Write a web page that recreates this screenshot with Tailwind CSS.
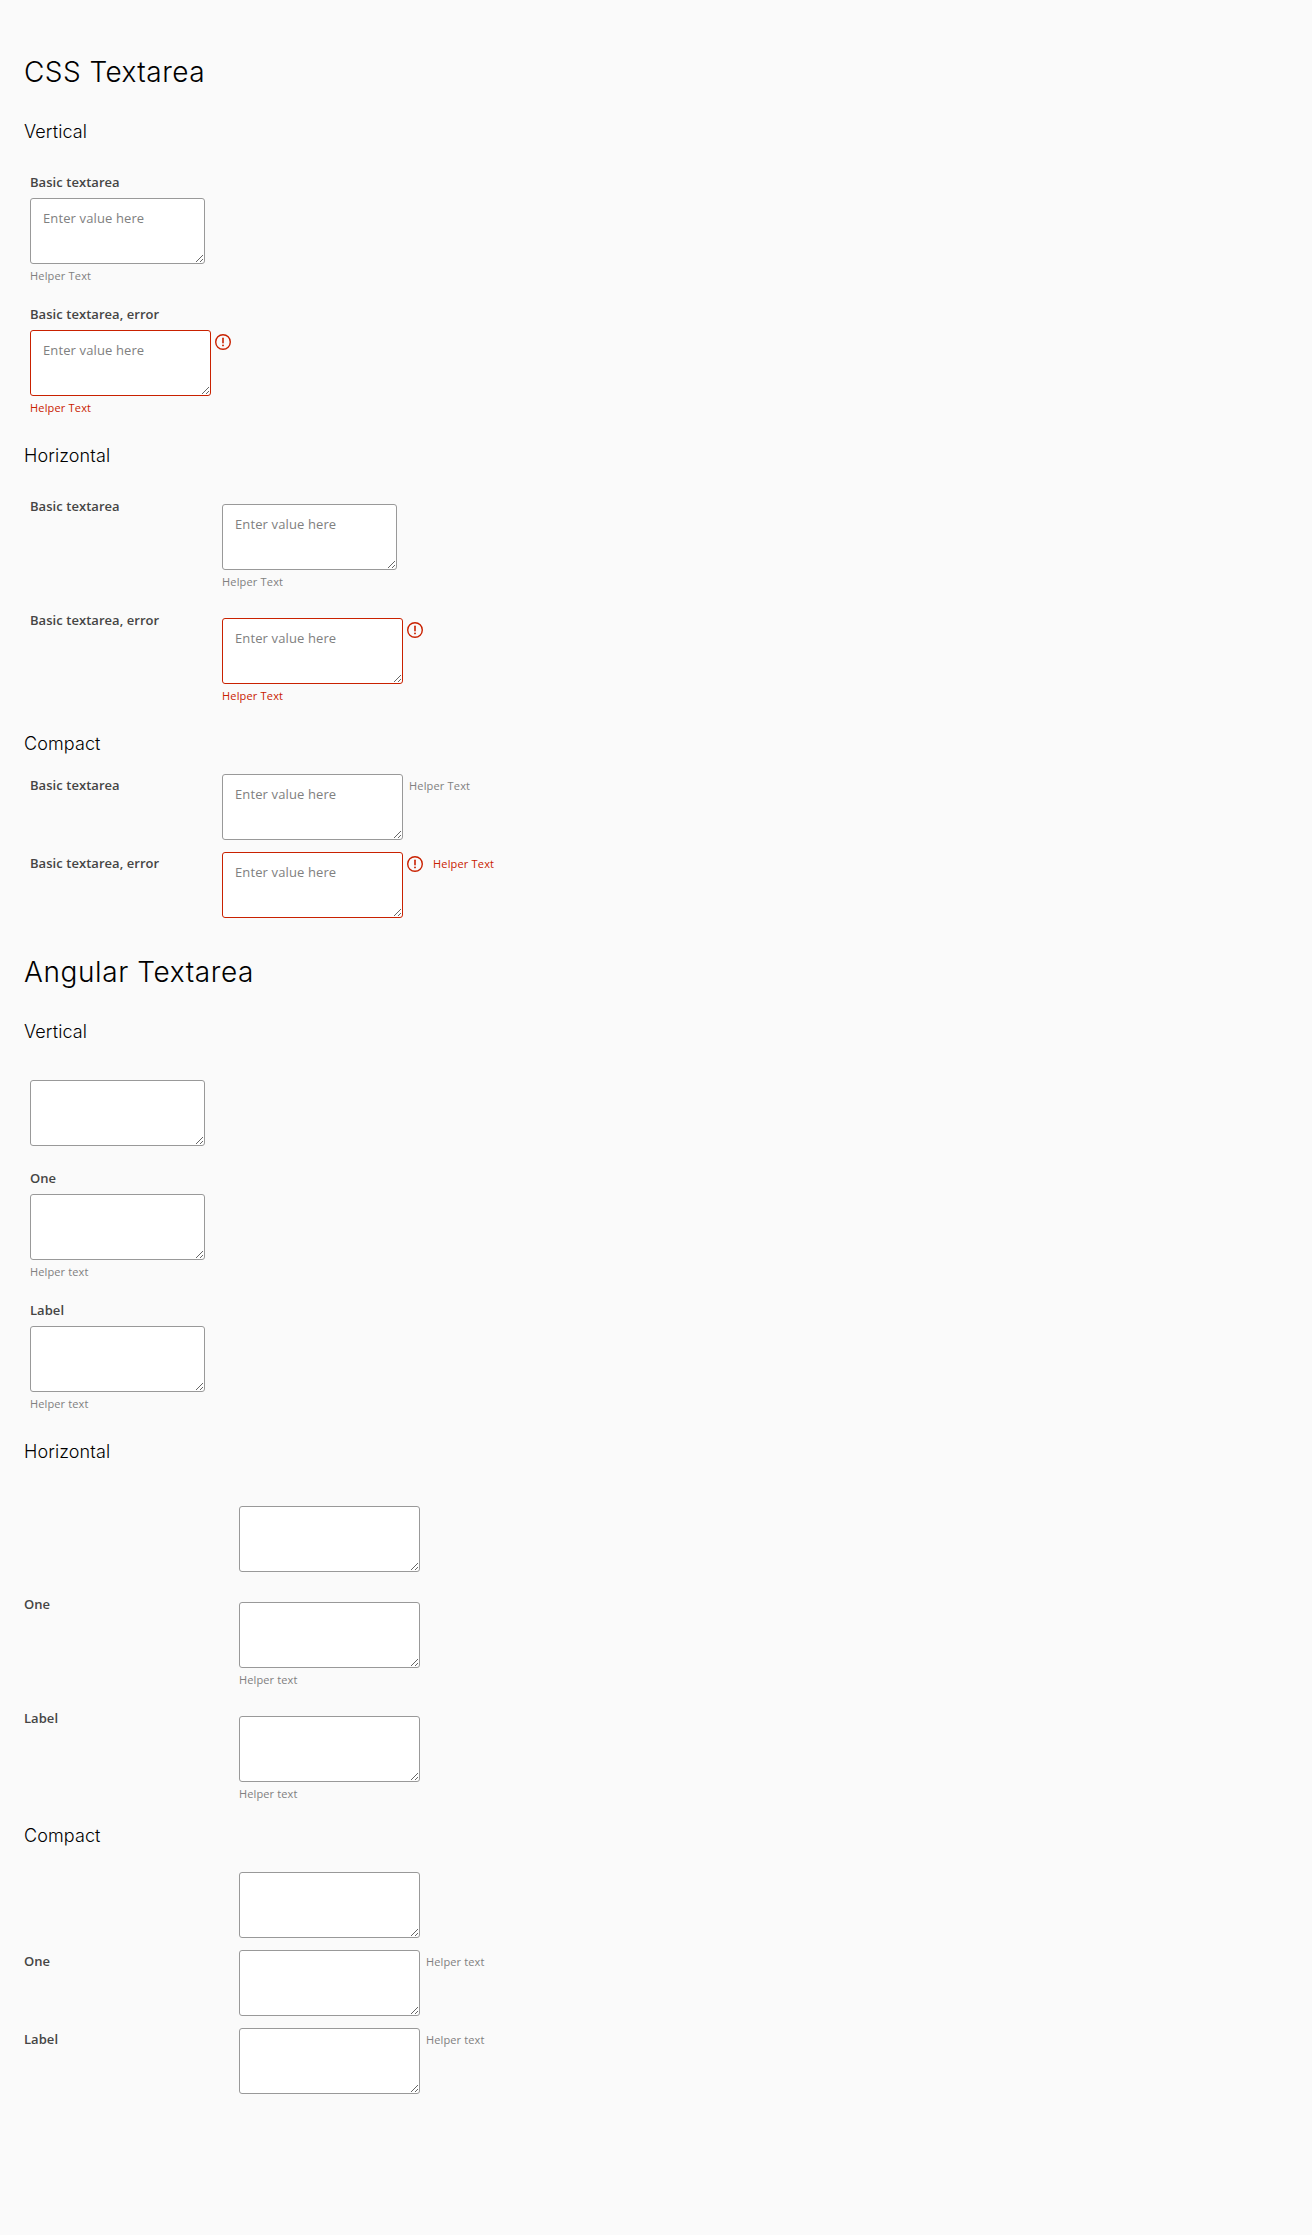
<!DOCTYPE html>
<html lang="en">
<head>
<meta charset="utf-8">
<title>Textarea</title>
<script src="https://cdn.jsdelivr.net/npm/@tailwindcss/browser@4"></script>
</head>
<body class="min-h-[2235px] bg-[#fafafa] font-['Open_Sans',sans-serif] text-[13px] leading-6 text-[#454545]">
<svg class="hidden">
  <symbol id="exclamation" viewBox="0 0 16 16">
    <circle cx="8" cy="8" r="7.3" fill="none" stroke="currentColor" stroke-width="1.4"/>
    <path d="M8 4.2v4.6" fill="none" stroke="currentColor" stroke-width="1.6" stroke-linecap="round"/>
    <circle cx="8" cy="11.4" r=".95" fill="currentColor"/>
  </symbol>
</svg>
<main class="px-6 pt-12">

  <h1 class="h-12 font-['Inter',sans-serif] text-[28px] leading-12 font-[280] tracking-[0.45px] text-black">CSS Textarea</h1>

  <h4 class="mt-6 h-6 font-['Inter',sans-serif] text-[18px] font-light tracking-[0.1px] text-black">Vertical</h4>
  <form class="mt-[27px] flex flex-col gap-[15px] pl-1.5">
    <div class="flex flex-col items-start">
      <label class="h-6 leading-[22px] font-semibold tracking-[0.05px]">Basic textarea</label>
      <textarea class="mt-[3px] h-[66px] w-[175px] resize rounded-[3px] border border-[#999] bg-white px-3 py-[7px] tracking-[0.12px] placeholder:text-[#808080]" placeholder="Enter value here"></textarea>
      <span class="h-6 text-[11px] tracking-[0.18px] text-[#808080]">Helper Text</span>
    </div>
    <div class="flex flex-col items-start">
      <label class="h-6 leading-[22px] font-semibold tracking-[0.05px]">Basic textarea, error</label>
      <div class="mt-[3px] flex items-start gap-1">
        <textarea class="h-[66px] w-[181px] resize rounded-[3px] border border-[#c92100] bg-white px-3 py-[7px] tracking-[0.12px] placeholder:text-[#808080]" placeholder="Enter value here"></textarea>
        <svg class="mt-1 size-4 text-[#c92100]"><use href="#exclamation"/></svg>
      </div>
      <span class="h-6 text-[11px] tracking-[0.18px] text-[#c92100]">Helper Text</span>
    </div>
  </form>

  <h4 class="mt-6 h-6 font-['Inter',sans-serif] text-[18px] font-light tracking-[0.1px] text-black">Horizontal</h4>
  <form class="mt-[27px] flex flex-col gap-[15px] pl-1.5">
    <div class="flex items-start">
      <label class="w-48 leading-[22px] font-semibold tracking-[0.05px]">Basic textarea</label>
      <div class="flex flex-col items-start pt-[9px]">
        <textarea class="h-[66px] w-[175px] resize rounded-[3px] border border-[#999] bg-white px-3 py-[7px] tracking-[0.12px] placeholder:text-[#808080]" placeholder="Enter value here"></textarea>
        <span class="h-6 text-[11px] tracking-[0.18px] text-[#808080]">Helper Text</span>
      </div>
    </div>
    <div class="flex items-start">
      <label class="w-48 leading-[22px] font-semibold tracking-[0.05px]">Basic textarea, error</label>
      <div class="flex flex-col items-start pt-[9px]">
        <div class="flex items-start gap-1">
          <textarea class="h-[66px] w-[181px] resize rounded-[3px] border border-[#c92100] bg-white px-3 py-[7px] tracking-[0.12px] placeholder:text-[#808080]" placeholder="Enter value here"></textarea>
          <svg class="mt-1 size-4 text-[#c92100]"><use href="#exclamation"/></svg>
        </div>
        <span class="h-6 text-[11px] tracking-[0.18px] text-[#c92100]">Helper Text</span>
      </div>
    </div>
  </form>

  <h4 class="mt-6 h-6 font-['Inter',sans-serif] text-[18px] font-light tracking-[0.1px] text-black">Compact</h4>
  <form class="mt-[18px] flex flex-col gap-3 pl-1.5">
    <div class="flex items-start">
      <label class="w-48 leading-[22px] font-semibold tracking-[0.05px]">Basic textarea</label>
      <textarea class="h-[66px] w-[181px] resize rounded-[3px] border border-[#999] bg-white px-3 py-[7px] tracking-[0.12px] placeholder:text-[#808080]" placeholder="Enter value here"></textarea>
      <span class="ml-1.5 text-[11px] tracking-[0.18px] text-[#808080]">Helper Text</span>
    </div>
    <div class="flex items-start">
      <label class="w-48 leading-[22px] font-semibold tracking-[0.05px]">Basic textarea, error</label>
      <textarea class="h-[66px] w-[181px] resize rounded-[3px] border border-[#c92100] bg-white px-3 py-[7px] tracking-[0.12px] placeholder:text-[#808080]" placeholder="Enter value here"></textarea>
      <svg class="mt-1 ml-1 size-4 text-[#c92100]"><use href="#exclamation"/></svg>
      <span class="ml-2.5 text-[11px] tracking-[0.18px] text-[#c92100]">Helper Text</span>
    </div>
  </form>

  <h1 class="mt-[30px] h-12 font-['Inter',sans-serif] text-[28px] leading-12 font-[280] tracking-[0.6px] text-black">Angular Textarea</h1>

  <h4 class="mt-6 h-6 font-['Inter',sans-serif] text-[18px] font-light tracking-[0.1px] text-black">Vertical</h4>
  <form class="mt-9 flex flex-col pl-1.5">
    <textarea class="h-[66px] w-[175px] resize rounded-[3px] border border-[#999] bg-white px-3 py-[7px]"></textarea>
    <div class="mt-[21px] flex flex-col items-start">
      <label class="h-6 leading-[22px] font-semibold tracking-[0.05px]">One</label>
      <textarea class="mt-[3px] h-[66px] w-[175px] resize rounded-[3px] border border-[#999] bg-white px-3 py-[7px]"></textarea>
      <span class="h-6 text-[11px] tracking-[0.12px] text-[#808080]">Helper text</span>
    </div>
    <div class="mt-[15px] flex flex-col items-start">
      <label class="h-6 leading-[22px] font-semibold tracking-[0.05px]">Label</label>
      <textarea class="mt-[3px] h-[66px] w-[175px] resize rounded-[3px] border border-[#999] bg-white px-3 py-[7px]"></textarea>
      <span class="h-6 text-[11px] tracking-[0.12px] text-[#808080]">Helper text</span>
    </div>
  </form>

  <h4 class="mt-6 h-6 font-['Inter',sans-serif] text-[18px] font-light tracking-[0.1px] text-black">Horizontal</h4>
  <form class="mt-[42px] flex flex-col">
    <div class="flex items-start pl-[215px]">
      <textarea class="h-[66px] w-[181px] resize rounded-[3px] border border-[#999] bg-white px-3 py-[7px]"></textarea>
    </div>
    <div class="mt-[21px] flex items-start">
      <label class="w-[215px] leading-[22px] font-semibold tracking-[0.05px]">One</label>
      <div class="flex flex-col items-start pt-[9px]">
        <textarea class="h-[66px] w-[181px] resize rounded-[3px] border border-[#999] bg-white px-3 py-[7px]"></textarea>
        <span class="h-6 text-[11px] tracking-[0.12px] text-[#808080]">Helper text</span>
      </div>
    </div>
    <div class="mt-[15px] flex items-start">
      <label class="w-[215px] leading-[22px] font-semibold tracking-[0.05px]">Label</label>
      <div class="flex flex-col items-start pt-[9px]">
        <textarea class="h-[66px] w-[181px] resize rounded-[3px] border border-[#999] bg-white px-3 py-[7px]"></textarea>
        <span class="h-6 text-[11px] tracking-[0.12px] text-[#808080]">Helper text</span>
      </div>
    </div>
  </form>

  <h4 class="mt-[18px] h-6 font-['Inter',sans-serif] text-[18px] font-light tracking-[0.1px] text-black">Compact</h4>
  <form class="mt-6 flex flex-col gap-3">
    <div class="flex items-start pl-[215px]">
      <textarea class="h-[66px] w-[181px] resize rounded-[3px] border border-[#999] bg-white px-3 py-[7px]"></textarea>
    </div>
    <div class="flex items-start">
      <label class="w-[215px] leading-[22px] font-semibold tracking-[0.05px]">One</label>
      <textarea class="h-[66px] w-[181px] resize rounded-[3px] border border-[#999] bg-white px-3 py-[7px]"></textarea>
      <span class="ml-1.5 text-[11px] tracking-[0.12px] text-[#808080]">Helper text</span>
    </div>
    <div class="flex items-start">
      <label class="w-[215px] leading-[22px] font-semibold tracking-[0.05px]">Label</label>
      <textarea class="h-[66px] w-[181px] resize rounded-[3px] border border-[#999] bg-white px-3 py-[7px]"></textarea>
      <span class="ml-1.5 text-[11px] tracking-[0.12px] text-[#808080]">Helper text</span>
    </div>
  </form>
</main>
</body>
</html>
